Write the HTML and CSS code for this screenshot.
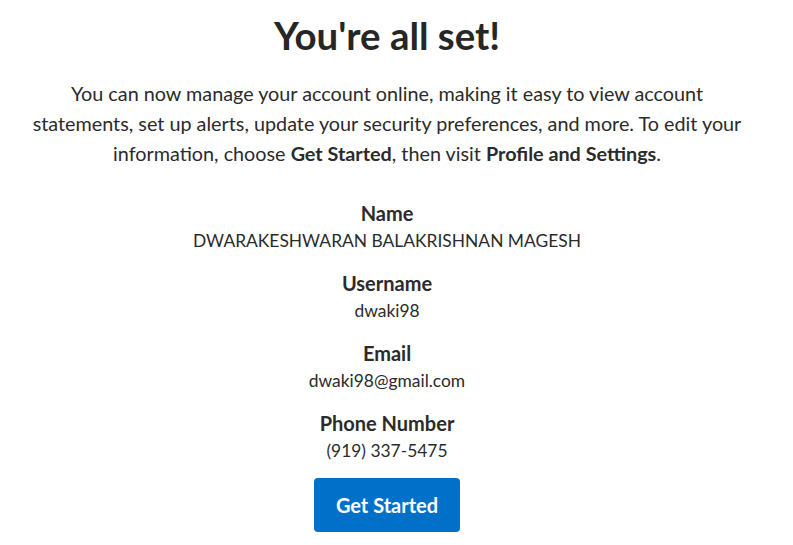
FILE: index.html
```html
<!DOCTYPE html>
<html lang="en">
<head>
<meta charset="utf-8">
<title>You're all set!</title>
<link rel="stylesheet" href="styles.css">
</head>
<body>
<main class="page">
  <h1 class="title">You're all set!</h1>
  <p class="intro">You can now manage your account online, making it easy to view account statements, set up alerts, update your security preferences, and more. To edit your information, choose <strong>Get Started</strong>, then visit <strong>Profile and Settings</strong>.</p>
  <dl class="details">
    <div class="item"><dt>Name</dt><dd>DWARAKESHWARAN BALAKRISHNAN MAGESH</dd></div>
    <div class="item"><dt>Username</dt><dd>dwaki98</dd></div>
    <div class="item"><dt>Email</dt><dd>dwaki98@gmail.com</dd></div>
    <div class="item"><dt>Phone Number</dt><dd>(919) 337-5475</dd></div>
  </dl>
  <button class="btn" type="button">Get Started</button>
</main>
</body>
</html>
```
FILE: styles.css
```css
html, body { margin: 0; padding: 0; background: #fff; }
body { font-family: Lato, "Open Sans", sans-serif; color: #2b2b2b; }
.page { display: flex; flex-direction: column; align-items: center; text-align: center; padding: 10px 29px 0 10px; }
.title { margin: 0; font-size: 38.4px; font-weight: 700; line-height: 50px; color: #262626; }
.intro { margin: 18px 0 0; font-size: 19.8px; line-height: 30px; max-width: 716px; }
.intro strong { font-weight: 700; }
.details { margin: 32px 0 0; display: flex; flex-direction: column; gap: 16px; }
.item { display: flex; flex-direction: column; }
.details dt { font-weight: 700; font-size: 20px; line-height: 27px; }
.details dd { margin: 0; font-size: 17.4px; line-height: 27px; }
.btn { margin-top: 14px; background: #0070c9; color: #fff; border: 0; border-radius: 4px; font-family: Lato, sans-serif; font-weight: 700; font-size: 20px; width: 146px; height: 54px; cursor: pointer; }
```
